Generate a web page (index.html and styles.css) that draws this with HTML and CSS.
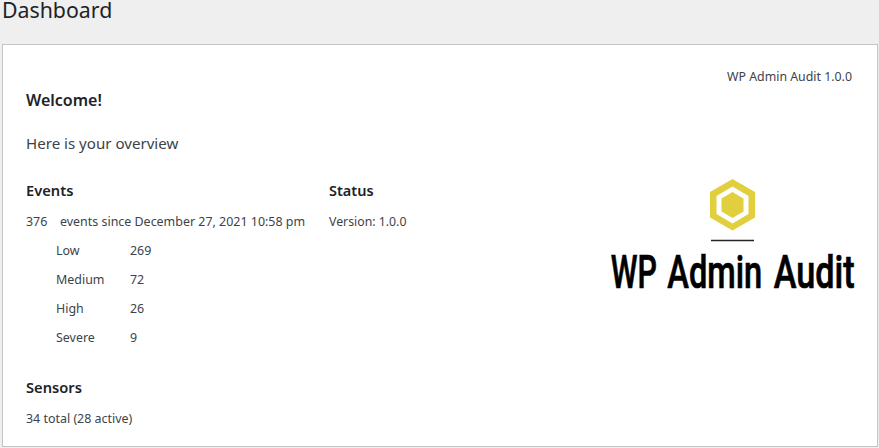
FILE: index.html
```html
<!DOCTYPE html>
<html lang="en">
<head>
<meta charset="utf-8">
<title>Dashboard</title>
<link rel="stylesheet" href="styles.css">
</head>
<body>
<h1>Dashboard</h1>
<main class="panel">
  <div class="content">
    <h2 class="welcome">Welcome!</h2>
    <p class="about">Here is your overview</p>
    <div class="columns">
      <section>
        <h3>Events</h3>
        <p class="total"><span class="count">376</span><span class="since">events since December 27, 2021 10:58 pm</span></p>
        <dl class="levels">
          <dt>Low</dt><dd>269</dd>
          <dt>Medium</dt><dd>72</dd>
          <dt>High</dt><dd>26</dd>
          <dt>Severe</dt><dd>9</dd>
        </dl>
      </section>
      <section>
        <h3 class="status">Status</h3>
        <p class="version">Version: 1.0.0</p>
      </section>
    </div>
    <section class="sensors">
      <h3>Sensors</h3>
      <p>34 total (28 active)</p>
    </section>
  </div>
  <aside>
    <p class="product">WP Admin Audit 1.0.0</p>
    <svg class="logo" width="250" height="140" viewBox="0 0 250 140">
      <path d="M124.500 4L147 17V42.500L124.500 55.500L102 42.500V17Z" fill="#e1cf3d"/>
      <path d="M124.500 11.500L140.500 21V39L124.500 48.500L108.500 39V21Z" fill="#fff"/>
      <path d="M124.500 17L135.500 23.500V36.500L124.500 43L113.500 36.500V23.500Z" fill="#e1cf3d"/>
      <path d="M103 65.500H146" stroke="#282326" stroke-width="1.600"/>
      <text transform="translate(2.700 112.500) scale(.66 1)">WP</text>
      <text transform="translate(59.300 112.500) scale(.71 1)">Admin</text>
      <text transform="translate(165.700 112.500) scale(.745 1)">Audit</text>
    </svg>
  </aside>
</main>
</body>
</html>
```
FILE: styles.css
```css
* { box-sizing: border-box; }
body {
  margin: 0;
  height: 448px;
  overflow: hidden;
  background: #efefef;
  color: #3c434a;
  font: 12.450px/29px "Noto Sans", "Open Sans", sans-serif;
}
h1, h2, h3, p, dl, dd { margin: 0; }
h1 {
  height: 44px;
  padding-left: 2px;
  color: #1d2327;
  font-size: 21.300px;
  font-weight: 400;
  line-height: 20px;
}
.panel {
  display: flex;
  justify-content: space-between;
  width: 876px;
  height: 403px;
  margin-left: 2px;
  padding: 0 22px 0 23px;
  background: #fff;
  border: 1px solid #c3c4c7;
}
.content { padding-top: 40px; }
h2, h3 {
  color: #1d2327;
  font-size: 14.700px;
  font-weight: 600;
  line-height: 32px;
}
h3 { padding-bottom: 1px; }
.welcome { font-size: 16px; line-height: 30px; }
.status { font-size: 14.500px; }
.about { padding-top: 13px; font-size: 15.100px; line-height: 30px; }
.columns {
  display: grid;
  grid-template-columns: 303px 200px;
  padding-top: 16px;
}
.version { font-size: 12.300px; }
.total { display: flex; }
.count { width: 34px; }
.since { white-space: nowrap; }
.levels {
  display: grid;
  grid-template-columns: 74px 100px;
  padding-left: 30px;
}
.sensors { padding-top: 19px; }
aside {
  display: flex;
  flex-direction: column;
  align-items: flex-end;
  padding-top: 17px;
}
.product { padding-right: 3px; font-size: 12.350px; }
.logo { display: block; margin: 84px -3px 0 0; overflow: visible; }
.logo text {
  font: 500 46px Roboto, sans-serif;
  fill: #000;
  stroke: #000;
  stroke-width: .7px;
}
```
